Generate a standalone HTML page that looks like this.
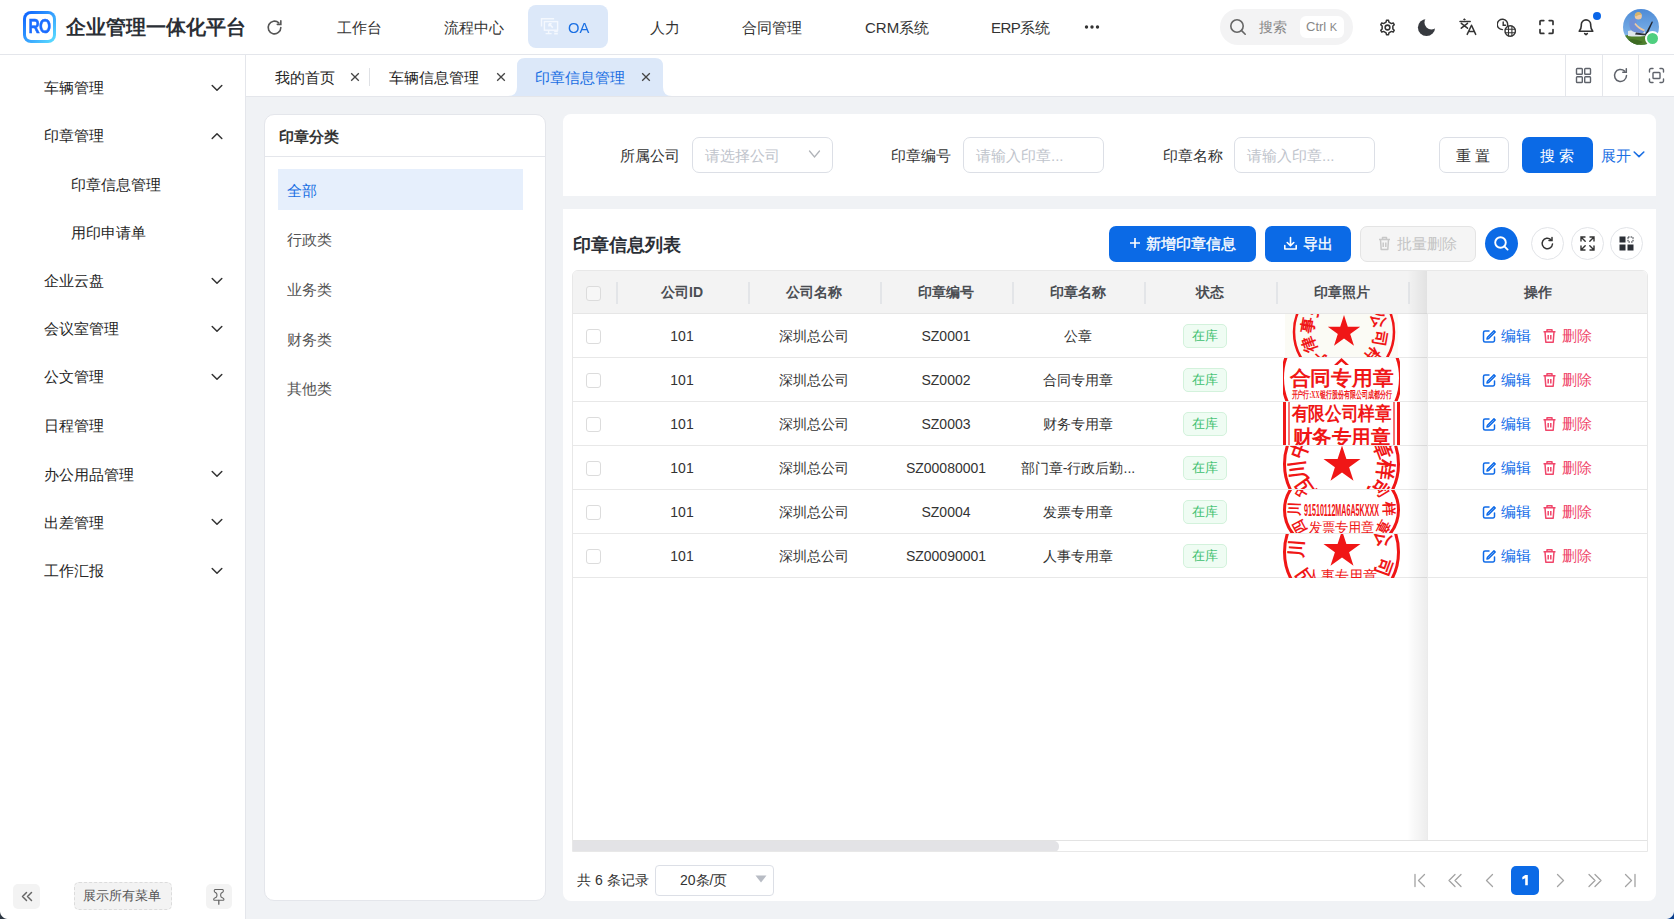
<!DOCTYPE html>
<html><head><meta charset="utf-8">
<style>
*{box-sizing:border-box;margin:0;padding:0}
html,body{width:1674px;height:919px;overflow:hidden}
body{position:relative;background:#f0f2f5;font-family:"Liberation Sans",sans-serif;color:#333;font-size:15px}
.a{position:absolute;white-space:nowrap}
svg{display:block}
/* header */
#hdr{position:absolute;left:0;top:0;width:1674px;height:55px;background:#fff;border-bottom:1px solid #e4e6eb}
#side{position:absolute;left:0;top:55px;width:246px;height:864px;background:#fff;border-right:1px solid #e4e6eb}
#tabs{position:absolute;left:246px;top:55px;width:1428px;height:42px;background:#fff;border-bottom:1px solid #e4e6eb}
.card{position:absolute;background:#fff}
.t15{font-size:15px;line-height:20px}
.t14{font-size:14px;line-height:20px}
.t13{font-size:13px;line-height:18px}
</style></head><body>

<!-- HEADER -->
<div id="hdr">
  <div class="a" style="left:23px;top:11px;width:33px;height:32px;border-radius:8px;padding:3px;background:linear-gradient(135deg,#0a5cff,#5fe3ff)">
    <div style="width:100%;height:100%;background:#fff;border-radius:5px"></div>
  </div>
  <div class="a" style="left:24px;top:13px;width:31px;font-size:21px;font-weight:bold;color:#1a6cff;letter-spacing:-1px;text-align:center;line-height:26px;transform:scaleX(0.74);-webkit-text-stroke:0.5px #1a6cff">RO</div>
  <div class="a" style="left:66px;top:13px;font-size:20px;font-weight:bold;color:#2b2f36;line-height:28px">企业管理一体化平台</div>
  <svg class="a" style="left:265px;top:18px" width="19" height="19" viewBox="0 0 24 24" fill="none" stroke="#555" stroke-width="2" stroke-linecap="round"><path d="M20 12a8 8 0 1 1-2.6-5.9"/><path d="M20 3.5v4.5h-4.5"/></svg>
  <div class="a t15" style="left:337px;top:18px">工作台</div>
  <div class="a t15" style="left:444px;top:18px">流程中心</div>
  <div class="a" style="left:528px;top:5px;width:80px;height:43px;background:#dce8f9;border-radius:8px"></div>
  <svg class="a" style="left:540px;top:17px" width="19" height="19" viewBox="0 0 19 19" fill="none" stroke="#f4f8fe" stroke-width="1.4"><path d="M1.5 9.5V1.8h12.6"/><rect x="4.4" y="4.6" width="13.2" height="8.6"/><path d="M9 6.8l3.8 3.8M9 6.8v2.6M9 6.8h2.6" stroke-width="1.5"/><path d="M5.6 16.6h6M8.6 13.2v3.4M14.2 14.6h3.6M14.2 16.8h3.6"/></svg>
  <div class="a" style="left:568px;top:18px;font-size:15.5px;line-height:20px;color:#1a6fe3;transform:scaleX(0.95);transform-origin:0 0">OA</div>
  <div class="a t15" style="left:650px;top:18px">人力</div>
  <div class="a t15" style="left:742px;top:18px">合同管理</div>
  <div class="a t15" style="left:865px;top:18px">CRM系统</div>
  <div class="a t15" style="left:991px;top:18px"><span style="letter-spacing:-0.6px">ERP</span>系统</div>
  <svg class="a" style="left:1084px;top:24px" width="16" height="6" viewBox="0 0 16 6" fill="#333"><circle cx="2.5" cy="3" r="1.7"/><circle cx="8" cy="3" r="1.7"/><circle cx="13.5" cy="3" r="1.7"/></svg>
  <div class="a" style="left:1220px;top:9px;width:133px;height:36px;background:#f3f3f4;border-radius:18px"></div>
  <svg class="a" style="left:1229px;top:18px" width="18" height="18" viewBox="0 0 18 18" fill="none" stroke="#666" stroke-width="1.6" stroke-linecap="round"><circle cx="8" cy="8" r="6.2"/><path d="M12.6 12.6l3.6 3.6"/></svg>
  <div class="a t14" style="left:1259px;top:17px;color:#888">搜索</div>
  <div class="a" style="left:1300px;top:16px;width:44px;height:22px;background:#fff;border-radius:6px"></div>
  <div class="a" style="left:1306px;top:18px;font-size:13px;line-height:18px;color:#888">Ctrl <span style="font-size:11px">K</span></div>
  <svg class="a" style="left:1378px;top:17.5px" width="19" height="19" viewBox="0 0 24 24" fill="none" stroke="#333" stroke-width="1.9" stroke-linejoin="round"><path d="M10.20 5.24 L10.69 2.89 L13.31 2.89 L13.80 5.24 L16.96 7.06 L19.23 6.31 L20.54 8.58 L18.76 10.18 L18.76 13.82 L20.54 15.42 L19.23 17.69 L16.96 16.94 L13.80 18.76 L13.31 21.11 L10.69 21.11 L10.20 18.76 L7.04 16.94 L4.77 17.69 L3.46 15.42 L5.24 13.82 L5.24 10.18 L3.46 8.58 L4.77 6.31 L7.04 7.06Z"/><circle cx="12" cy="12" r="3"/></svg>
  <svg class="a" style="left:1417px;top:17px" width="19" height="20" viewBox="0 0 19 20"><defs><mask id="mm"><rect width="19" height="20" fill="#fff"/><circle cx="14.5" cy="5.5" r="7" fill="#000"/></mask></defs><circle cx="9.5" cy="10.5" r="8.6" fill="#373a3f" mask="url(#mm)"/></svg>
  <svg class="a" style="left:1458px;top:17px" width="20" height="20" viewBox="0 0 20 20" fill="none" stroke="#333" stroke-width="1.5" stroke-linecap="round" stroke-linejoin="round"><circle cx="6.3" cy="2.4" r=".6" fill="#333" stroke-width="1"/><path d="M2 4.5h10.2M3.3 6.4l6.2 4.8M9.5 6.4l-6.2 4.8"/><path d="M9.2 17.4l4.3-9.1 4.2 9.1M10.6 14.5h5.8"/></svg>
  <svg class="a" style="left:1497px;top:17px" width="20" height="21" viewBox="0 0 20 21" fill="none" stroke="#333" stroke-width="1.4" stroke-linecap="round"><path d="M10.6 8.2A5.2 5.2 0 1 0 5.5 12.6"/><path d="M6.2 5v3.2h2.4"/><circle cx="13.2" cy="14" r="5.2"/><path stroke-width="1.1" d="M8.2 12.3h10M8.2 15.7h10M11.5 9v10M14.9 9v10"/></svg>
  <svg class="a" style="left:1538px;top:19px" width="17" height="16" viewBox="0 0 17 16" fill="none" stroke="#333" stroke-width="1.7" stroke-linecap="round"><path d="M2 5.5V2.6A1 1 0 0 1 3 1.6h2.8M11.2 1.6H14a1 1 0 0 1 1 1v2.9M15 10.5v2.9a1 1 0 0 1-1 1h-2.8M5.8 14.4H3a1 1 0 0 1-1-1v-2.9"/></svg>
  <svg class="a" style="left:1577px;top:17px" width="18" height="19" viewBox="0 0 18 19" fill="none" stroke="#333" stroke-width="1.6" stroke-linejoin="round" stroke-linecap="round"><path d="M2.2 14.2C3.6 12.6 4.3 11.2 4.3 8.4V7.6A4.7 4.7 0 0 1 13.7 7.6V8.4C13.7 11.2 14.4 12.6 15.8 14.2Z"/><path d="M7.7 16.6L9 17.6 10.3 16.6"/></svg>
  <div class="a" style="left:1593px;top:12px;width:8px;height:8px;border-radius:50%;background:#0a66e8"></div>
  <svg class="a" style="left:1623px;top:9px" width="36" height="36" viewBox="0 0 36 36"><defs><clipPath id="av"><circle cx="18" cy="18" r="18"/></clipPath><linearGradient id="sky" x1="0" y1="0" x2="0" y2="1"><stop offset="0" stop-color="#4d8ad6"/><stop offset="1" stop-color="#8fc1ee"/></linearGradient></defs><g clip-path="url(#av)"><rect width="36" height="36" fill="url(#sky)"/><path d="M0 27 Q10 24 22 26 L36 27 V36 H0z" fill="#4f7f2c"/><path d="M4 31 Q12 29 20 33 L14 36 H2z" fill="#3d6a22"/><path d="M5 22 Q12 20 22 22 L22 27 Q12 28 5 27z" fill="#dfe6ec"/><path d="M6.5 12 Q9 8.5 13 9.5 L14 16 Q16 20 22 22 L20 24 Q13 24 9 22 Q5.5 19 6.5 12z" fill="#6f8fd6"/><path d="M12 14.5 Q15 19 21.5 21.5" stroke="#eec9a2" stroke-width="1.6" fill="none"/><circle cx="15.3" cy="7" r="3.6" fill="#eec9a2"/><path d="M11.8 6.5 Q12.5 2.5 16 3 Q18.5 3.6 18.6 6 Q16 5 13 7.5z" fill="#d7b46a"/><path d="M28.8 12.5 L30 12.8 L24 26 L22 25.5z" fill="#1f232b"/><path d="M13 23.5 L24 25 L23 26.5 L12 25.5z" fill="#2b2f36"/></g></svg>
<div class="a" style="left:1644.5px;top:30.5px;width:15px;height:15px;border-radius:50%;background:#4fcf7f;border:2px solid #fff"></div>
</div>

<!-- SIDEBAR -->
<div id="side">
<div class="a t15" style="left:44px;top:23px;color:#262626">车辆管理</div>
<svg class="a" style="left:211px;top:29px" width="12" height="8" viewBox="0 0 12 8" fill="none" stroke="#333" stroke-width="1.5" stroke-linecap="round" stroke-linejoin="round"><path d="M1.2 1.5L6 6.2l4.8-4.7"/></svg>
<div class="a t15" style="left:44px;top:71px;color:#262626">印章管理</div>
<svg class="a" style="left:211px;top:77px" width="12" height="8" viewBox="0 0 12 8" fill="none" stroke="#333" stroke-width="1.5" stroke-linecap="round" stroke-linejoin="round"><path d="M1.2 6.5L6 1.8l4.8 4.7"/></svg>
<div class="a t15" style="left:71px;top:120px;color:#262626">印章信息管理</div>
<div class="a t15" style="left:71px;top:168px;color:#262626">用印申请单</div>
<div class="a t15" style="left:44px;top:216px;color:#262626">企业云盘</div>
<svg class="a" style="left:211px;top:222px" width="12" height="8" viewBox="0 0 12 8" fill="none" stroke="#333" stroke-width="1.5" stroke-linecap="round" stroke-linejoin="round"><path d="M1.2 1.5L6 6.2l4.8-4.7"/></svg>
<div class="a t15" style="left:44px;top:264px;color:#262626">会议室管理</div>
<svg class="a" style="left:211px;top:270px" width="12" height="8" viewBox="0 0 12 8" fill="none" stroke="#333" stroke-width="1.5" stroke-linecap="round" stroke-linejoin="round"><path d="M1.2 1.5L6 6.2l4.8-4.7"/></svg>
<div class="a t15" style="left:44px;top:312px;color:#262626">公文管理</div>
<svg class="a" style="left:211px;top:318px" width="12" height="8" viewBox="0 0 12 8" fill="none" stroke="#333" stroke-width="1.5" stroke-linecap="round" stroke-linejoin="round"><path d="M1.2 1.5L6 6.2l4.8-4.7"/></svg>
<div class="a t15" style="left:44px;top:361px;color:#262626">日程管理</div>
<div class="a t15" style="left:44px;top:410px;color:#262626">办公用品管理</div>
<svg class="a" style="left:211px;top:415px" width="12" height="8" viewBox="0 0 12 8" fill="none" stroke="#333" stroke-width="1.5" stroke-linecap="round" stroke-linejoin="round"><path d="M1.2 1.5L6 6.2l4.8-4.7"/></svg>
<div class="a t15" style="left:44px;top:458px;color:#262626">出差管理</div>
<svg class="a" style="left:211px;top:463px" width="12" height="8" viewBox="0 0 12 8" fill="none" stroke="#333" stroke-width="1.5" stroke-linecap="round" stroke-linejoin="round"><path d="M1.2 1.5L6 6.2l4.8-4.7"/></svg>
<div class="a t15" style="left:44px;top:506px;color:#262626">工作汇报</div>
<svg class="a" style="left:211px;top:512px" width="12" height="8" viewBox="0 0 12 8" fill="none" stroke="#333" stroke-width="1.5" stroke-linecap="round" stroke-linejoin="round"><path d="M1.2 1.5L6 6.2l4.8-4.7"/></svg>
<div class="a" style="left:13px;top:829px;width:27px;height:25px;background:#f3f3f3;border-radius:5px"></div>
<svg class="a" style="left:20px;top:836px" width="13" height="11" viewBox="0 0 13 11" fill="none" stroke="#666" stroke-width="1.5" stroke-linecap="round" stroke-linejoin="round"><path d="M6.5 1.5L2.5 5.5l4 4M11.5 1.5L7.5 5.5l4 4"/></svg>
<div class="a" style="left:74px;top:827px;width:98px;height:28px;background:#f3f3f3;border:1px dashed #dcdcdc;border-radius:5px"></div>
<div class="a t13" style="left:83px;top:832px;color:#555">展示所有菜单</div>
<div class="a" style="left:206px;top:829px;width:26px;height:25px;background:#f3f3f3;border-radius:5px"></div>
<svg class="a" style="left:211px;top:831px" width="16" height="20" viewBox="0 0 16 20" fill="none" stroke="#666" stroke-width="1.1" stroke-linejoin="round" stroke-linecap="round"><path d="M4 3.5H11.6Q12.3 3.5 12.3 4.5V5.3Q12.3 6.2 11 6.6Q9.7 7 9.7 8.6V10Q9.7 11.3 11.8 12Q12.9 12.4 12.9 13.3V13.6Q12.9 14.3 12.2 14.3H3.4Q2.7 14.3 2.7 13.6V13.3Q2.7 12.4 3.8 12Q5.9 11.3 5.9 10V8.6Q5.9 7 4.6 6.6Q3.3 6.2 3.3 5.3V4.5Q3.3 3.5 4 3.5Z"/><path d="M7.8 14.5V18.2" stroke-width="1.3"/></svg>
</div>

<!-- TABS -->
<div id="tabs">
<div class="a t15" style="left:29px;top:13px;color:#262626">我的首页</div>
<svg class="a" style="left:104px;top:17px" width="10" height="10" viewBox="0 0 10 10" stroke="#444" stroke-width="1.3"><path d="M1.2 1.2l7.6 7.6M8.8 1.2l-7.6 7.6"/></svg>
<div class="a" style="left:123px;top:13px;width:1px;height:18px;background:#dfe1e5"></div>
<div class="a t15" style="left:143px;top:13px;color:#262626">车辆信息管理</div>
<svg class="a" style="left:250px;top:17px" width="10" height="10" viewBox="0 0 10 10" stroke="#444" stroke-width="1.3"><path d="M1.2 1.2l7.6 7.6M8.8 1.2l-7.6 7.6"/></svg>
<svg class="a" style="left:262px;top:3px" width="164" height="38" viewBox="0 0 164 38"><path d="M0 38 Q9 38 9 29 V8 Q9 0 17 0 H147 Q155 0 155 8 V29 Q155 38 164 38 Z" fill="#dce8f9"/></svg>
<div class="a t15" style="left:289px;top:13px;color:#1a6fe3">印章信息管理</div>
<svg class="a" style="left:395px;top:17px" width="10" height="10" viewBox="0 0 10 10" stroke="#444" stroke-width="1.3"><path d="M1.2 1.2l7.6 7.6M8.8 1.2l-7.6 7.6"/></svg>
<div class="a" style="left:1319px;top:0;width:1px;height:41px;background:#e4e6eb"></div>
<div class="a" style="left:1356px;top:0;width:1px;height:41px;background:#e4e6eb"></div>
<div class="a" style="left:1392px;top:0;width:1px;height:41px;background:#e4e6eb"></div>
<svg class="a" style="left:1329px;top:12px" width="17" height="17" viewBox="0 0 17 17" fill="none" stroke="#5f636b" stroke-width="1.4"><rect x="1.5" y="1.5" width="5.8" height="5.8" rx=".8"/><rect x="9.7" y="1.5" width="5.8" height="5.8" rx=".8"/><rect x="1.5" y="9.7" width="5.8" height="5.8" rx=".8"/><rect x="9.7" y="9.7" width="5.8" height="5.8" rx=".8"/></svg>
<svg class="a" style="left:1366px;top:12px" width="17" height="17" viewBox="0 0 17 17" fill="none" stroke="#5f636b" stroke-width="1.5" stroke-linecap="round"><path d="M14.5 8.5A6 6 0 1 1 12.6 4.1"/><path d="M14.3 1.8v3.5h-3.5"/></svg>
<svg class="a" style="left:1402px;top:12px" width="17" height="17" viewBox="0 0 17 17" fill="none" stroke="#5f636b" stroke-width="1.4" stroke-linecap="round"><path d="M1.5 5V3a1.5 1.5 0 0 1 1.5-1.5h2M12 1.5h2a1.5 1.5 0 0 1 1.5 1.5v2M15.5 12v2a1.5 1.5 0 0 1-1.5 1.5h-2M5 15.5H3A1.5 1.5 0 0 1 1.5 14v-2"/><rect x="5" y="5.5" width="7" height="6" rx=".8"/></svg>
</div>

<!-- LEFT CARD -->
<div class="card" style="left:264px;top:114px;width:282px;height:787px;border:1px solid #e4e6eb;border-radius:10px"></div>

<!-- SEARCH CARD -->
<div class="card" style="left:563px;top:114px;width:1093px;height:82px;border-radius:8px 8px 0 0"></div>

<!-- TABLE CARD -->
<div class="card" style="left:563px;top:209px;width:1093px;height:692px;border-radius:0 0 8px 8px"></div>

<!-- LEFT CONTENT -->
<div class="a" style="left:279px;top:127px;font-size:15px;line-height:20px;font-weight:bold;color:#333">印章分类</div>
<div class="a" style="left:265px;top:156px;width:280px;height:1px;background:#e4e6eb"></div>
<div class="a" style="left:278px;top:169px;width:245px;height:41px;background:#e6effc"></div>
<div class="a t15" style="left:287px;top:181px;color:#1a6fe3">全部</div>
<div class="a t15" style="left:287px;top:230px;color:#555">行政类</div>
<div class="a t15" style="left:287px;top:280px;color:#555">业务类</div>
<div class="a t15" style="left:287px;top:330px;color:#555">财务类</div>
<div class="a t15" style="left:287px;top:379px;color:#555">其他类</div>
<!-- SEARCH CONTENT -->
<div class="a t15" style="left:620px;top:146px">所属公司</div>
<div class="a" style="left:692px;top:137px;width:141px;height:36px;border:1px solid #dcdfe6;border-radius:7px"></div>
<div class="a t15" style="left:705px;top:146px;color:#c0c4cc">请选择公司</div>
<svg class="a" style="left:808px;top:149px" width="13" height="10" viewBox="0 0 13 10" fill="none" stroke="#b0b3b8" stroke-width="1.3" stroke-linecap="round"><path d="M1.5 2l5 6 5-6"/></svg>
<div class="a t15" style="left:891px;top:146px">印章编号</div>
<div class="a" style="left:963px;top:137px;width:141px;height:36px;border:1px solid #dcdfe6;border-radius:7px"></div>
<div class="a t15" style="left:976px;top:146px;color:#c0c4cc">请输入印章...</div>
<div class="a t15" style="left:1163px;top:146px">印章名称</div>
<div class="a" style="left:1234px;top:137px;width:141px;height:36px;border:1px solid #dcdfe6;border-radius:7px"></div>
<div class="a t15" style="left:1247px;top:146px;color:#c0c4cc">请输入印章...</div>
<div class="a" style="left:1439px;top:137px;width:70px;height:36px;border:1px solid #dcdfe6;border-radius:7px"></div>
<div class="a t15" style="left:1456px;top:146px;color:#333">重 置</div>
<div class="a" style="left:1522px;top:137px;width:71px;height:36px;background:#0b6ae6;border-radius:7px"></div>
<div class="a t15" style="left:1540px;top:146px;color:#fff">搜 索</div>
<div class="a t15" style="left:1601px;top:146px;color:#1a6fe3">展开</div>
<svg class="a" style="left:1633px;top:150px" width="12" height="9" viewBox="0 0 12 9" fill="none" stroke="#1a6fe3" stroke-width="1.6" stroke-linecap="round" stroke-linejoin="round"><path d="M1.2 2L6 6.6 10.8 2"/></svg>
<!-- TABLE CARD CONTENT -->
<div class="a" style="left:573px;top:232px;font-size:18px;line-height:26px;font-weight:bold;color:#2b2f36">印章信息列表</div>
<div class="a" style="left:1109px;top:226px;width:147px;height:36px;background:#0b6ae6;border-radius:7px"></div>
<svg class="a" style="left:1129px;top:237px" width="12" height="12" viewBox="0 0 12 12" stroke="#fff" stroke-width="1.6"><path d="M6 1v10M1 6h10"/></svg>
<div class="a t15" style="left:1146px;top:234px;color:#fff;-webkit-text-stroke:0.35px #fff">新增印章信息</div>
<div class="a" style="left:1265px;top:226px;width:86px;height:36px;background:#0b6ae6;border-radius:7px"></div>
<svg class="a" style="left:1283px;top:236px" width="15" height="15" viewBox="0 0 15 15" fill="none" stroke="#fff" stroke-width="1.6" stroke-linecap="round" stroke-linejoin="round"><path d="M7.5 1.5v8M4.2 6.5l3.3 3.3 3.3-3.3M1.8 9.5v3.5h11.4V9.5"/></svg>
<div class="a t15" style="left:1303px;top:234px;color:#fff;-webkit-text-stroke:0.35px #fff">导出</div>
<div class="a" style="left:1360px;top:226px;width:116px;height:36px;background:#f5f5f5;border:1px solid #e4e4e4;border-radius:7px"></div>
<svg class="a" style="left:1378px;top:236px" width="13" height="15" viewBox="0 0 13 15" fill="none" stroke="#c8c8c8" stroke-width="1.5" stroke-linejoin="round"><path d="M1 3.5h11M4.5 3.5V1.5h4v2M2.5 3.5l.7 10h6.6l.7-10M5.2 6.5v4.5M7.8 6.5v4.5"/></svg>
<div class="a t15" style="left:1397px;top:234px;color:#c4c4c4">批量删除</div>
<div class="a" style="left:1485px;top:227px;width:33px;height:33px;border-radius:50%;background:#0b6ae6"></div>
<svg class="a" style="left:1492px;top:234px" width="19" height="19" viewBox="0 0 19 19" fill="none" stroke="#fff" stroke-width="1.9" stroke-linecap="round"><circle cx="8.5" cy="8.5" r="5.3"/><path d="M12.4 12.4l3.2 3.2"/></svg>
<div class="a" style="left:1531px;top:227px;width:33px;height:33px;border-radius:50%;border:1px solid #e2e4e8"></div>
<svg class="a" style="left:1539px;top:235px" width="17" height="17" viewBox="0 0 17 17" fill="none" stroke="#333" stroke-width="1.5" stroke-linecap="round"><path d="M13.5 9A5.2 5.2 0 1 1 11.8 4.6"/><path d="M13 2.5v3h-3"/></svg>
<div class="a" style="left:1571px;top:227px;width:33px;height:33px;border-radius:50%;border:1px solid #e2e4e8"></div>
<svg class="a" style="left:1579px;top:235px" width="17" height="17" viewBox="0 0 17 17" fill="none" stroke="#333" stroke-width="1.4" stroke-linecap="round"><path d="M2 6V2h4M2 2l4.2 4.2M11 2h4v4M15 2l-4.2 4.2M2 11v4h4M2 15l4.2-4.2M15 11v4h-4M15 15l-4.2-4.2"/></svg>
<div class="a" style="left:1610px;top:227px;width:33px;height:33px;border-radius:50%;border:1px solid #e2e4e8"></div>
<svg class="a" style="left:1618px;top:235px" width="17" height="17" viewBox="0 0 17 17"><rect x="1.5" y="1.5" width="6" height="6" fill="#2b2f36"/><rect x="1.5" y="9.5" width="6" height="6" fill="#2b2f36"/><rect x="9.5" y="9.5" width="6" height="6" fill="#2b2f36"/><rect x="10" y="2" width="5" height="5" fill="none" stroke="#2b2f36" stroke-width="1" stroke-dasharray="1.6 1"/></svg>
<div class="a" style="left:572px;top:270px;width:1076px;height:582px;border:1px solid #e8e8e8;border-radius:6px 6px 0 0;overflow:hidden">
<div class="a" style="left:0;top:0;width:1074px;height:43px;background:#f3f3f3;border-bottom:1px solid #e6e6e6"></div>
<div class="a" style="left:43px;top:11px;width:2px;height:22px;background:#e3e5e8"></div>
<div class="a" style="left:175px;top:11px;width:2px;height:22px;background:#e3e5e8"></div>
<div class="a" style="left:307px;top:11px;width:2px;height:22px;background:#e3e5e8"></div>
<div class="a" style="left:439px;top:11px;width:2px;height:22px;background:#e3e5e8"></div>
<div class="a" style="left:571px;top:11px;width:2px;height:22px;background:#e3e5e8"></div>
<div class="a" style="left:703px;top:11px;width:2px;height:22px;background:#e3e5e8"></div>
<div class="a" style="left:835px;top:11px;width:2px;height:22px;background:#e3e5e8"></div>
<div class="a" style="left:13px;top:15px;width:15px;height:15px;border:1px solid #dcdcdc;border-radius:3px;background:#f7f7f7"></div>
<div class="a" style="left:49px;top:11px;width:120px;text-align:center;font-size:14px;line-height:20px;font-weight:bold;color:#4a4d52">公司ID</div>
<div class="a" style="left:181px;top:11px;width:120px;text-align:center;font-size:14px;line-height:20px;font-weight:bold;color:#4a4d52">公司名称</div>
<div class="a" style="left:313px;top:11px;width:120px;text-align:center;font-size:14px;line-height:20px;font-weight:bold;color:#4a4d52">印章编号</div>
<div class="a" style="left:445px;top:11px;width:120px;text-align:center;font-size:14px;line-height:20px;font-weight:bold;color:#4a4d52">印章名称</div>
<div class="a" style="left:577px;top:11px;width:120px;text-align:center;font-size:14px;line-height:20px;font-weight:bold;color:#4a4d52">状态</div>
<div class="a" style="left:709px;top:11px;width:120px;text-align:center;font-size:14px;line-height:20px;font-weight:bold;color:#4a4d52">印章照片</div>
<div class="a" style="left:0;top:86px;width:1074px;height:1px;background:#e8e8e8"></div>
<div class="a" style="left:13px;top:58px;width:15px;height:15px;border:1px solid #dcdcdc;border-radius:3px;background:#fff"></div>
<div class="a" style="left:44px;top:55px;width:130px;text-align:center;font-size:14px;line-height:20px;color:#333">101</div>
<div class="a" style="left:176px;top:55px;width:130px;text-align:center;font-size:14px;line-height:20px;color:#333">深圳总公司</div>
<div class="a" style="left:308px;top:55px;width:130px;text-align:center;font-size:14px;line-height:20px;color:#333">SZ0001</div>
<div class="a" style="left:440px;top:55px;width:130px;text-align:center;font-size:14px;line-height:20px;color:#333">公章</div>
<div class="a" style="left:610px;top:53px;width:44px;height:24px;border:1px solid #d3f2dc;background:#effcf3;border-radius:5px;font-size:13px;line-height:22px;text-align:center;color:#3dbf6e">在库</div>
<div class="a" style="left:0;top:130px;width:1074px;height:1px;background:#e8e8e8"></div>
<div class="a" style="left:13px;top:102px;width:15px;height:15px;border:1px solid #dcdcdc;border-radius:3px;background:#fff"></div>
<div class="a" style="left:44px;top:99px;width:130px;text-align:center;font-size:14px;line-height:20px;color:#333">101</div>
<div class="a" style="left:176px;top:99px;width:130px;text-align:center;font-size:14px;line-height:20px;color:#333">深圳总公司</div>
<div class="a" style="left:308px;top:99px;width:130px;text-align:center;font-size:14px;line-height:20px;color:#333">SZ0002</div>
<div class="a" style="left:440px;top:99px;width:130px;text-align:center;font-size:14px;line-height:20px;color:#333">合同专用章</div>
<div class="a" style="left:610px;top:97px;width:44px;height:24px;border:1px solid #d3f2dc;background:#effcf3;border-radius:5px;font-size:13px;line-height:22px;text-align:center;color:#3dbf6e">在库</div>
<div class="a" style="left:0;top:174px;width:1074px;height:1px;background:#e8e8e8"></div>
<div class="a" style="left:13px;top:146px;width:15px;height:15px;border:1px solid #dcdcdc;border-radius:3px;background:#fff"></div>
<div class="a" style="left:44px;top:143px;width:130px;text-align:center;font-size:14px;line-height:20px;color:#333">101</div>
<div class="a" style="left:176px;top:143px;width:130px;text-align:center;font-size:14px;line-height:20px;color:#333">深圳总公司</div>
<div class="a" style="left:308px;top:143px;width:130px;text-align:center;font-size:14px;line-height:20px;color:#333">SZ0003</div>
<div class="a" style="left:440px;top:143px;width:130px;text-align:center;font-size:14px;line-height:20px;color:#333">财务专用章</div>
<div class="a" style="left:610px;top:141px;width:44px;height:24px;border:1px solid #d3f2dc;background:#effcf3;border-radius:5px;font-size:13px;line-height:22px;text-align:center;color:#3dbf6e">在库</div>
<div class="a" style="left:0;top:218px;width:1074px;height:1px;background:#e8e8e8"></div>
<div class="a" style="left:13px;top:190px;width:15px;height:15px;border:1px solid #dcdcdc;border-radius:3px;background:#fff"></div>
<div class="a" style="left:44px;top:187px;width:130px;text-align:center;font-size:14px;line-height:20px;color:#333">101</div>
<div class="a" style="left:176px;top:187px;width:130px;text-align:center;font-size:14px;line-height:20px;color:#333">深圳总公司</div>
<div class="a" style="left:308px;top:187px;width:130px;text-align:center;font-size:14px;line-height:20px;color:#333">SZ00080001</div>
<div class="a" style="left:440px;top:187px;width:130px;text-align:center;font-size:14px;line-height:20px;color:#333">部门章-行政后勤...</div>
<div class="a" style="left:610px;top:185px;width:44px;height:24px;border:1px solid #d3f2dc;background:#effcf3;border-radius:5px;font-size:13px;line-height:22px;text-align:center;color:#3dbf6e">在库</div>
<div class="a" style="left:0;top:262px;width:1074px;height:1px;background:#e8e8e8"></div>
<div class="a" style="left:13px;top:234px;width:15px;height:15px;border:1px solid #dcdcdc;border-radius:3px;background:#fff"></div>
<div class="a" style="left:44px;top:231px;width:130px;text-align:center;font-size:14px;line-height:20px;color:#333">101</div>
<div class="a" style="left:176px;top:231px;width:130px;text-align:center;font-size:14px;line-height:20px;color:#333">深圳总公司</div>
<div class="a" style="left:308px;top:231px;width:130px;text-align:center;font-size:14px;line-height:20px;color:#333">SZ0004</div>
<div class="a" style="left:440px;top:231px;width:130px;text-align:center;font-size:14px;line-height:20px;color:#333">发票专用章</div>
<div class="a" style="left:610px;top:229px;width:44px;height:24px;border:1px solid #d3f2dc;background:#effcf3;border-radius:5px;font-size:13px;line-height:22px;text-align:center;color:#3dbf6e">在库</div>
<div class="a" style="left:0;top:306px;width:1074px;height:1px;background:#e8e8e8"></div>
<div class="a" style="left:13px;top:278px;width:15px;height:15px;border:1px solid #dcdcdc;border-radius:3px;background:#fff"></div>
<div class="a" style="left:44px;top:275px;width:130px;text-align:center;font-size:14px;line-height:20px;color:#333">101</div>
<div class="a" style="left:176px;top:275px;width:130px;text-align:center;font-size:14px;line-height:20px;color:#333">深圳总公司</div>
<div class="a" style="left:308px;top:275px;width:130px;text-align:center;font-size:14px;line-height:20px;color:#333">SZ00090001</div>
<div class="a" style="left:440px;top:275px;width:130px;text-align:center;font-size:14px;line-height:20px;color:#333">人事专用章</div>
<div class="a" style="left:610px;top:273px;width:44px;height:24px;border:1px solid #d3f2dc;background:#effcf3;border-radius:5px;font-size:13px;line-height:22px;text-align:center;color:#3dbf6e">在库</div>
<svg class="a" style="left:710px;top:43px" width="117" height="264" viewBox="0 0 117 264" font-family="Liberation Serif,serif"><defs><clipPath id="r0"><rect x="0" y="0" width="117" height="43"/></clipPath><clipPath id="r1"><rect x="0" y="44" width="117" height="43"/></clipPath><clipPath id="r2"><rect x="0" y="88" width="117" height="43"/></clipPath><clipPath id="r3"><rect x="0" y="132" width="117" height="43"/></clipPath><clipPath id="r4"><rect x="0" y="176" width="117" height="43"/></clipPath><clipPath id="r5"><rect x="0" y="220" width="117" height="44"/></clipPath></defs><g clip-path="url(#r0)"><rect x="2" y="0" width="113" height="43" fill="#fbfbf5"/><circle cx="61" cy="18" r="50" fill="none" stroke="#f01616" stroke-width="2.5"/><polygon points="61.0,1.0 64.8,12.7 77.2,12.7 67.2,20.0 71.0,31.8 61.0,24.5 51.0,31.8 54.8,20.0 44.8,12.7 57.2,12.7" fill="#f01616"/><text x="73.7" y="52.8" transform="rotate(-200.0 73.7 52.8)" font-size="16" font-weight="bold" text-anchor="middle" dominant-baseline="central" fill="#f01616">湾</text><text x="54.6" y="54.4" transform="rotate(-170.0 54.6 54.4)" font-size="16" font-weight="bold" text-anchor="middle" dominant-baseline="central" fill="#f01616">安</text><text x="37.2" y="46.3" transform="rotate(-140.0 37.2 46.3)" font-size="16" font-weight="bold" text-anchor="middle" dominant-baseline="central" fill="#f01616">字</text><text x="26.2" y="30.7" transform="rotate(-110.0 26.2 30.7)" font-size="16" font-weight="bold" text-anchor="middle" dominant-baseline="central" fill="#f01616">律</text><text x="24.6" y="11.6" transform="rotate(-80.0 24.6 11.6)" font-size="16" font-weight="bold" text-anchor="middle" dominant-baseline="central" fill="#f01616">事</text><text x="32.7" y="-5.8" transform="rotate(-50.0 32.7 -5.8)" font-size="16" font-weight="bold" text-anchor="middle" dominant-baseline="central" fill="#f01616">务</text><text x="48.3" y="-16.8" transform="rotate(-20.0 48.3 -16.8)" font-size="16" font-weight="bold" text-anchor="middle" dominant-baseline="central" fill="#f01616">所</text><text x="67.4" y="-18.4" transform="rotate(10.0 67.4 -18.4)" font-size="16" font-weight="bold" text-anchor="middle" dominant-baseline="central" fill="#f01616">有</text><text x="84.8" y="-10.3" transform="rotate(40.0 84.8 -10.3)" font-size="16" font-weight="bold" text-anchor="middle" dominant-baseline="central" fill="#f01616">限</text><text x="95.8" y="5.3" transform="rotate(70.0 95.8 5.3)" font-size="16" font-weight="bold" text-anchor="middle" dominant-baseline="central" fill="#f01616">公</text><text x="97.4" y="24.4" transform="rotate(100.0 97.4 24.4)" font-size="16" font-weight="bold" text-anchor="middle" dominant-baseline="central" fill="#f01616">司</text><text x="89.3" y="41.8" transform="rotate(130.0 89.3 41.8)" font-size="16" font-weight="bold" text-anchor="middle" dominant-baseline="central" fill="#f01616">样</text><text x="73.7" y="52.8" transform="rotate(160.0 73.7 52.8)" font-size="16" font-weight="bold" text-anchor="middle" dominant-baseline="central" fill="#f01616">章</text></g><g clip-path="url(#r1)"><circle cx="58.5" cy="64" r="59" fill="none" stroke="#f01616" stroke-width="3"/><polygon points="51,51 58.5,44 66,51 62.5,51 58.5,47.5 54.5,51" fill="#f01616"/><text x="58.5" y="71" font-size="20" font-weight="bold" text-anchor="middle" fill="#f01616" textLength="104" lengthAdjust="spacingAndGlyphs">合同专用章</text><text x="58.5" y="84" font-size="9.5" font-weight="bold" text-anchor="middle" fill="#f01616" textLength="100" lengthAdjust="spacingAndGlyphs">开户行:XX银行股份有限公司成都分行</text></g><g clip-path="url(#r2)"><rect x="1.5" y="60" width="114" height="100" fill="none" stroke="#f01616" stroke-width="3"/><rect x="6" y="64" width="105" height="92" fill="none" stroke="#f01616" stroke-width="1.2"/><text x="58.5" y="105.5" font-size="19" font-weight="bold" text-anchor="middle" fill="#f01616" textLength="100" lengthAdjust="spacingAndGlyphs">有限公司样章</text><text x="58.5" y="130.5" font-size="21" font-weight="bold" text-anchor="middle" fill="#f01616" textLength="98" lengthAdjust="spacingAndGlyphs">财务专用章</text></g><g clip-path="url(#r3)"><circle cx="58.5" cy="150" r="57" fill="none" stroke="#f01616" stroke-width="3"/><polygon points="59.0,131.5 63.4,145.0 77.5,145.0 66.1,153.3 70.5,166.8 59.0,158.4 47.5,166.8 51.9,153.3 40.5,145.0 54.6,145.0" fill="#f01616"/><text x="22.5" y="175.2" transform="rotate(-125.0 22.5 175.2)" font-size="20" font-weight="bold" text-anchor="middle" dominant-baseline="central" fill="#f01616">四</text><text x="14.8" y="155.5" transform="rotate(-97.2 14.8 155.5)" font-size="20" font-weight="bold" text-anchor="middle" dominant-baseline="central" fill="#f01616">川</text><text x="17.3" y="134.6" transform="rotate(-69.4 17.3 134.6)" font-size="20" font-weight="bold" text-anchor="middle" dominant-baseline="central" fill="#f01616">中</text><text x="29.2" y="117.1" transform="rotate(-41.7 29.2 117.1)" font-size="20" font-weight="bold" text-anchor="middle" dominant-baseline="central" fill="#f01616">行</text><text x="47.9" y="107.3" transform="rotate(-13.9 47.9 107.3)" font-size="20" font-weight="bold" text-anchor="middle" dominant-baseline="central" fill="#f01616">政</text><text x="69.1" y="107.3" transform="rotate(13.9 69.1 107.3)" font-size="20" font-weight="bold" text-anchor="middle" dominant-baseline="central" fill="#f01616">后</text><text x="87.8" y="117.1" transform="rotate(41.7 87.8 117.1)" font-size="20" font-weight="bold" text-anchor="middle" dominant-baseline="central" fill="#f01616">勤</text><text x="99.7" y="134.6" transform="rotate(69.4 99.7 134.6)" font-size="20" font-weight="bold" text-anchor="middle" dominant-baseline="central" fill="#f01616">章</text><text x="102.2" y="155.5" transform="rotate(97.2 102.2 155.5)" font-size="20" font-weight="bold" text-anchor="middle" dominant-baseline="central" fill="#f01616">样</text><text x="94.5" y="175.2" transform="rotate(125.0 94.5 175.2)" font-size="20" font-weight="bold" text-anchor="middle" dominant-baseline="central" fill="#f01616">司</text></g><g clip-path="url(#r4)"><ellipse cx="58.5" cy="196" rx="57" ry="45" fill="none" stroke="#f01616" stroke-width="3"/><text x="17.0" y="213.4" transform="rotate(-118.0 17.0 213.4)" font-size="14" font-weight="bold" text-anchor="middle" dominant-baseline="central" fill="#f01616">四</text><text x="11.5" y="194.7" transform="rotate(-88.0 11.5 194.7)" font-size="14" font-weight="bold" text-anchor="middle" dominant-baseline="central" fill="#f01616">川</text><text x="18.6" y="176.4" transform="rotate(-58.0 18.6 176.4)" font-size="14" font-weight="bold" text-anchor="middle" dominant-baseline="central" fill="#f01616">中</text><text x="98.4" y="176.4" transform="rotate(58.0 98.4 176.4)" font-size="14" font-weight="bold" text-anchor="middle" dominant-baseline="central" fill="#f01616">司</text><text x="105.5" y="194.7" transform="rotate(88.0 105.5 194.7)" font-size="14" font-weight="bold" text-anchor="middle" dominant-baseline="central" fill="#f01616">样</text><text x="100.0" y="213.4" transform="rotate(118.0 100.0 213.4)" font-size="14" font-weight="bold" text-anchor="middle" dominant-baseline="central" fill="#f01616">章</text><text x="58.5" y="202" font-size="16" font-weight="bold" font-family="Liberation Sans" text-anchor="middle" fill="#f01616" textLength="75" lengthAdjust="spacingAndGlyphs">91510112MA6A5KXXX</text><text x="58.5" y="219" font-size="15" text-anchor="middle" fill="#f01616" textLength="66" lengthAdjust="spacingAndGlyphs">发票专用章</text></g><g clip-path="url(#r5)"><circle cx="58.5" cy="238" r="57" fill="none" stroke="#f01616" stroke-width="3"/><polygon points="59.0,216.5 63.4,230.0 77.5,230.0 66.1,238.3 70.5,251.8 59.0,243.4 47.5,251.8 51.9,238.3 40.5,230.0 54.6,230.0" fill="#f01616"/><text x="21.6" y="263.8" transform="rotate(-125.0 21.6 263.8)" font-size="18" font-weight="bold" text-anchor="middle" dominant-baseline="central" fill="#f01616">四</text><text x="13.6" y="234.7" transform="rotate(-85.8 13.6 234.7)" font-size="18" font-weight="bold" text-anchor="middle" dominant-baseline="central" fill="#f01616">川</text><text x="25.8" y="207.1" transform="rotate(-46.7 25.8 207.1)" font-size="18" font-weight="bold" text-anchor="middle" dominant-baseline="central" fill="#f01616">中</text><text x="52.6" y="193.4" transform="rotate(-7.5 52.6 193.4)" font-size="18" font-weight="bold" text-anchor="middle" dominant-baseline="central" fill="#f01616">有</text><text x="82.1" y="199.7" transform="rotate(31.7 82.1 199.7)" font-size="18" font-weight="bold" text-anchor="middle" dominant-baseline="central" fill="#f01616">限</text><text x="101.0" y="223.2" transform="rotate(70.8 101.0 223.2)" font-size="18" font-weight="bold" text-anchor="middle" dominant-baseline="central" fill="#f01616">公</text><text x="100.8" y="253.4" transform="rotate(110.0 100.8 253.4)" font-size="18" font-weight="bold" text-anchor="middle" dominant-baseline="central" fill="#f01616">司</text><text x="58.5" y="268" font-size="16" text-anchor="middle" fill="#f01616" textLength="70" lengthAdjust="spacingAndGlyphs">人事专用章</text></g></svg>
<div class="a" style="left:834px;top:0;width:20px;height:569px;background:linear-gradient(90deg,rgba(0,0,0,0),rgba(0,0,0,0.07))"></div>
<div class="a" style="left:854px;top:0;width:220px;height:569px;background:#fff;border-left:1px solid #ebebeb"></div>
<div class="a" style="left:854px;top:0;width:220px;height:43px;background:#f3f3f3;border-bottom:1px solid #e6e6e6"></div>
<div class="a" style="left:905px;top:11px;width:120px;text-align:center;font-size:14px;line-height:20px;font-weight:bold;color:#4a4d52">操作</div>
<div class="a" style="left:854px;top:86px;width:220px;height:1px;background:#e8e8e8"></div>
<svg class="a" style="left:909px;top:58px" width="15" height="15" viewBox="0 0 15 15" fill="none" stroke="#0f6be8" stroke-width="1.5" stroke-linecap="round" stroke-linejoin="round"><path d="M7 2H3a1.5 1.5 0 0 0-1.5 1.5v8A1.5 1.5 0 0 0 3 13h8a1.5 1.5 0 0 0 1.5-1.5V8"/><path d="M12 1.8l1.2 1.2-6.5 6.5-1.7.5.5-1.7z"/></svg>
<div class="a" style="left:928px;top:55px;font-size:15px;line-height:20px;color:#0f6be8">编辑</div>
<svg class="a" style="left:969px;top:57px" width="15" height="16" viewBox="0 0 15 16" fill="none" stroke="#f0466a" stroke-width="1.5" stroke-linejoin="round"><path d="M1.5 3.8h12M5 3.8V1.8h5v2M3 3.8l.8 10.4h7.4L12 3.8M6.2 7v4.5M8.8 7v4.5"/></svg>
<div class="a" style="left:989px;top:55px;font-size:15px;line-height:20px;color:#f0466a">删除</div>
<div class="a" style="left:854px;top:130px;width:220px;height:1px;background:#e8e8e8"></div>
<svg class="a" style="left:909px;top:102px" width="15" height="15" viewBox="0 0 15 15" fill="none" stroke="#0f6be8" stroke-width="1.5" stroke-linecap="round" stroke-linejoin="round"><path d="M7 2H3a1.5 1.5 0 0 0-1.5 1.5v8A1.5 1.5 0 0 0 3 13h8a1.5 1.5 0 0 0 1.5-1.5V8"/><path d="M12 1.8l1.2 1.2-6.5 6.5-1.7.5.5-1.7z"/></svg>
<div class="a" style="left:928px;top:99px;font-size:15px;line-height:20px;color:#0f6be8">编辑</div>
<svg class="a" style="left:969px;top:101px" width="15" height="16" viewBox="0 0 15 16" fill="none" stroke="#f0466a" stroke-width="1.5" stroke-linejoin="round"><path d="M1.5 3.8h12M5 3.8V1.8h5v2M3 3.8l.8 10.4h7.4L12 3.8M6.2 7v4.5M8.8 7v4.5"/></svg>
<div class="a" style="left:989px;top:99px;font-size:15px;line-height:20px;color:#f0466a">删除</div>
<div class="a" style="left:854px;top:174px;width:220px;height:1px;background:#e8e8e8"></div>
<svg class="a" style="left:909px;top:146px" width="15" height="15" viewBox="0 0 15 15" fill="none" stroke="#0f6be8" stroke-width="1.5" stroke-linecap="round" stroke-linejoin="round"><path d="M7 2H3a1.5 1.5 0 0 0-1.5 1.5v8A1.5 1.5 0 0 0 3 13h8a1.5 1.5 0 0 0 1.5-1.5V8"/><path d="M12 1.8l1.2 1.2-6.5 6.5-1.7.5.5-1.7z"/></svg>
<div class="a" style="left:928px;top:143px;font-size:15px;line-height:20px;color:#0f6be8">编辑</div>
<svg class="a" style="left:969px;top:145px" width="15" height="16" viewBox="0 0 15 16" fill="none" stroke="#f0466a" stroke-width="1.5" stroke-linejoin="round"><path d="M1.5 3.8h12M5 3.8V1.8h5v2M3 3.8l.8 10.4h7.4L12 3.8M6.2 7v4.5M8.8 7v4.5"/></svg>
<div class="a" style="left:989px;top:143px;font-size:15px;line-height:20px;color:#f0466a">删除</div>
<div class="a" style="left:854px;top:218px;width:220px;height:1px;background:#e8e8e8"></div>
<svg class="a" style="left:909px;top:190px" width="15" height="15" viewBox="0 0 15 15" fill="none" stroke="#0f6be8" stroke-width="1.5" stroke-linecap="round" stroke-linejoin="round"><path d="M7 2H3a1.5 1.5 0 0 0-1.5 1.5v8A1.5 1.5 0 0 0 3 13h8a1.5 1.5 0 0 0 1.5-1.5V8"/><path d="M12 1.8l1.2 1.2-6.5 6.5-1.7.5.5-1.7z"/></svg>
<div class="a" style="left:928px;top:187px;font-size:15px;line-height:20px;color:#0f6be8">编辑</div>
<svg class="a" style="left:969px;top:189px" width="15" height="16" viewBox="0 0 15 16" fill="none" stroke="#f0466a" stroke-width="1.5" stroke-linejoin="round"><path d="M1.5 3.8h12M5 3.8V1.8h5v2M3 3.8l.8 10.4h7.4L12 3.8M6.2 7v4.5M8.8 7v4.5"/></svg>
<div class="a" style="left:989px;top:187px;font-size:15px;line-height:20px;color:#f0466a">删除</div>
<div class="a" style="left:854px;top:262px;width:220px;height:1px;background:#e8e8e8"></div>
<svg class="a" style="left:909px;top:234px" width="15" height="15" viewBox="0 0 15 15" fill="none" stroke="#0f6be8" stroke-width="1.5" stroke-linecap="round" stroke-linejoin="round"><path d="M7 2H3a1.5 1.5 0 0 0-1.5 1.5v8A1.5 1.5 0 0 0 3 13h8a1.5 1.5 0 0 0 1.5-1.5V8"/><path d="M12 1.8l1.2 1.2-6.5 6.5-1.7.5.5-1.7z"/></svg>
<div class="a" style="left:928px;top:231px;font-size:15px;line-height:20px;color:#0f6be8">编辑</div>
<svg class="a" style="left:969px;top:233px" width="15" height="16" viewBox="0 0 15 16" fill="none" stroke="#f0466a" stroke-width="1.5" stroke-linejoin="round"><path d="M1.5 3.8h12M5 3.8V1.8h5v2M3 3.8l.8 10.4h7.4L12 3.8M6.2 7v4.5M8.8 7v4.5"/></svg>
<div class="a" style="left:989px;top:231px;font-size:15px;line-height:20px;color:#f0466a">删除</div>
<div class="a" style="left:854px;top:306px;width:220px;height:1px;background:#e8e8e8"></div>
<svg class="a" style="left:909px;top:278px" width="15" height="15" viewBox="0 0 15 15" fill="none" stroke="#0f6be8" stroke-width="1.5" stroke-linecap="round" stroke-linejoin="round"><path d="M7 2H3a1.5 1.5 0 0 0-1.5 1.5v8A1.5 1.5 0 0 0 3 13h8a1.5 1.5 0 0 0 1.5-1.5V8"/><path d="M12 1.8l1.2 1.2-6.5 6.5-1.7.5.5-1.7z"/></svg>
<div class="a" style="left:928px;top:275px;font-size:15px;line-height:20px;color:#0f6be8">编辑</div>
<svg class="a" style="left:969px;top:277px" width="15" height="16" viewBox="0 0 15 16" fill="none" stroke="#f0466a" stroke-width="1.5" stroke-linejoin="round"><path d="M1.5 3.8h12M5 3.8V1.8h5v2M3 3.8l.8 10.4h7.4L12 3.8M6.2 7v4.5M8.8 7v4.5"/></svg>
<div class="a" style="left:989px;top:275px;font-size:15px;line-height:20px;color:#f0466a">删除</div>
<div class="a" style="left:0;top:569px;width:1074px;height:12px;border-top:1px solid #e3e3e3;background:#fff"></div>
<div class="a" style="left:0;top:570px;width:486px;height:11px;background:#e3e3e6;border-radius:0 5px 5px 0"></div>
</div>
<div class="a t14" style="left:577px;top:870px;color:#333">共 6 条记录</div>
<div class="a" style="left:655px;top:865px;width:119px;height:31px;border:1px solid #dcdfe6;border-radius:4px"></div>
<div class="a t14" style="left:680px;top:870px;color:#333">20条/页</div>
<svg class="a" style="left:755px;top:875px" width="12" height="8" viewBox="0 0 12 8"><path d="M0.5 0.5h11L6 7.5z" fill="#b8bcc4"/></svg>
<svg class="a" style="left:1413px;top:873px" width="14" height="15" viewBox="0 0 14 15" fill="none" stroke="#a3a3a3" stroke-width="1.3" stroke-linecap="round" stroke-linejoin="round"><path d="M2 1.5v12M11.5 1.5l-6 6 6 6"/></svg>
<svg class="a" style="left:1447px;top:873px" width="16" height="15" viewBox="0 0 16 15" fill="none" stroke="#a3a3a3" stroke-width="1.3" stroke-linecap="round" stroke-linejoin="round"><path d="M8 1.5l-6 6 6 6M14 1.5l-6 6 6 6"/></svg>
<svg class="a" style="left:1484px;top:873px" width="10" height="15" viewBox="0 0 10 15" fill="none" stroke="#a3a3a3" stroke-width="1.3" stroke-linecap="round" stroke-linejoin="round"><path d="M8.5 1.5l-6 6 6 6"/></svg>
<div class="a" style="left:1511px;top:866px;width:28px;height:29px;background:#0b6ae6;border-radius:5px"></div><svg class="a" style="left:1521px;top:874px" width="8" height="12" viewBox="0 0 8 12"><path d="M4.2 1h2.6v10.2H4.2V4.3L1.3 5.6V3.1z" fill="#fff"/></svg>
<svg class="a" style="left:1556px;top:873px" width="10" height="15" viewBox="0 0 10 15" fill="none" stroke="#a3a3a3" stroke-width="1.3" stroke-linecap="round" stroke-linejoin="round"><path d="M1.5 1.5l6 6-6 6"/></svg>
<svg class="a" style="left:1587px;top:873px" width="16" height="15" viewBox="0 0 16 15" fill="none" stroke="#a3a3a3" stroke-width="1.3" stroke-linecap="round" stroke-linejoin="round"><path d="M2 1.5l6 6-6 6M8 1.5l6 6-6 6"/></svg>
<svg class="a" style="left:1623px;top:873px" width="14" height="15" viewBox="0 0 14 15" fill="none" stroke="#a3a3a3" stroke-width="1.3" stroke-linecap="round" stroke-linejoin="round"><path d="M2.5 1.5l6 6-6 6M12 1.5v12"/></svg>
<div class="a" style="left:0;top:911px;width:8px;height:8px;background:radial-gradient(circle at 100% 0,rgba(0,0,0,0) 7.5px,#2e3844 8.5px)"></div>
<div class="a" style="left:1666px;top:911px;width:8px;height:8px;background:radial-gradient(circle at 0 0,rgba(0,0,0,0) 7.5px,#0a3f8f 8.5px)"></div>
</body></html>
